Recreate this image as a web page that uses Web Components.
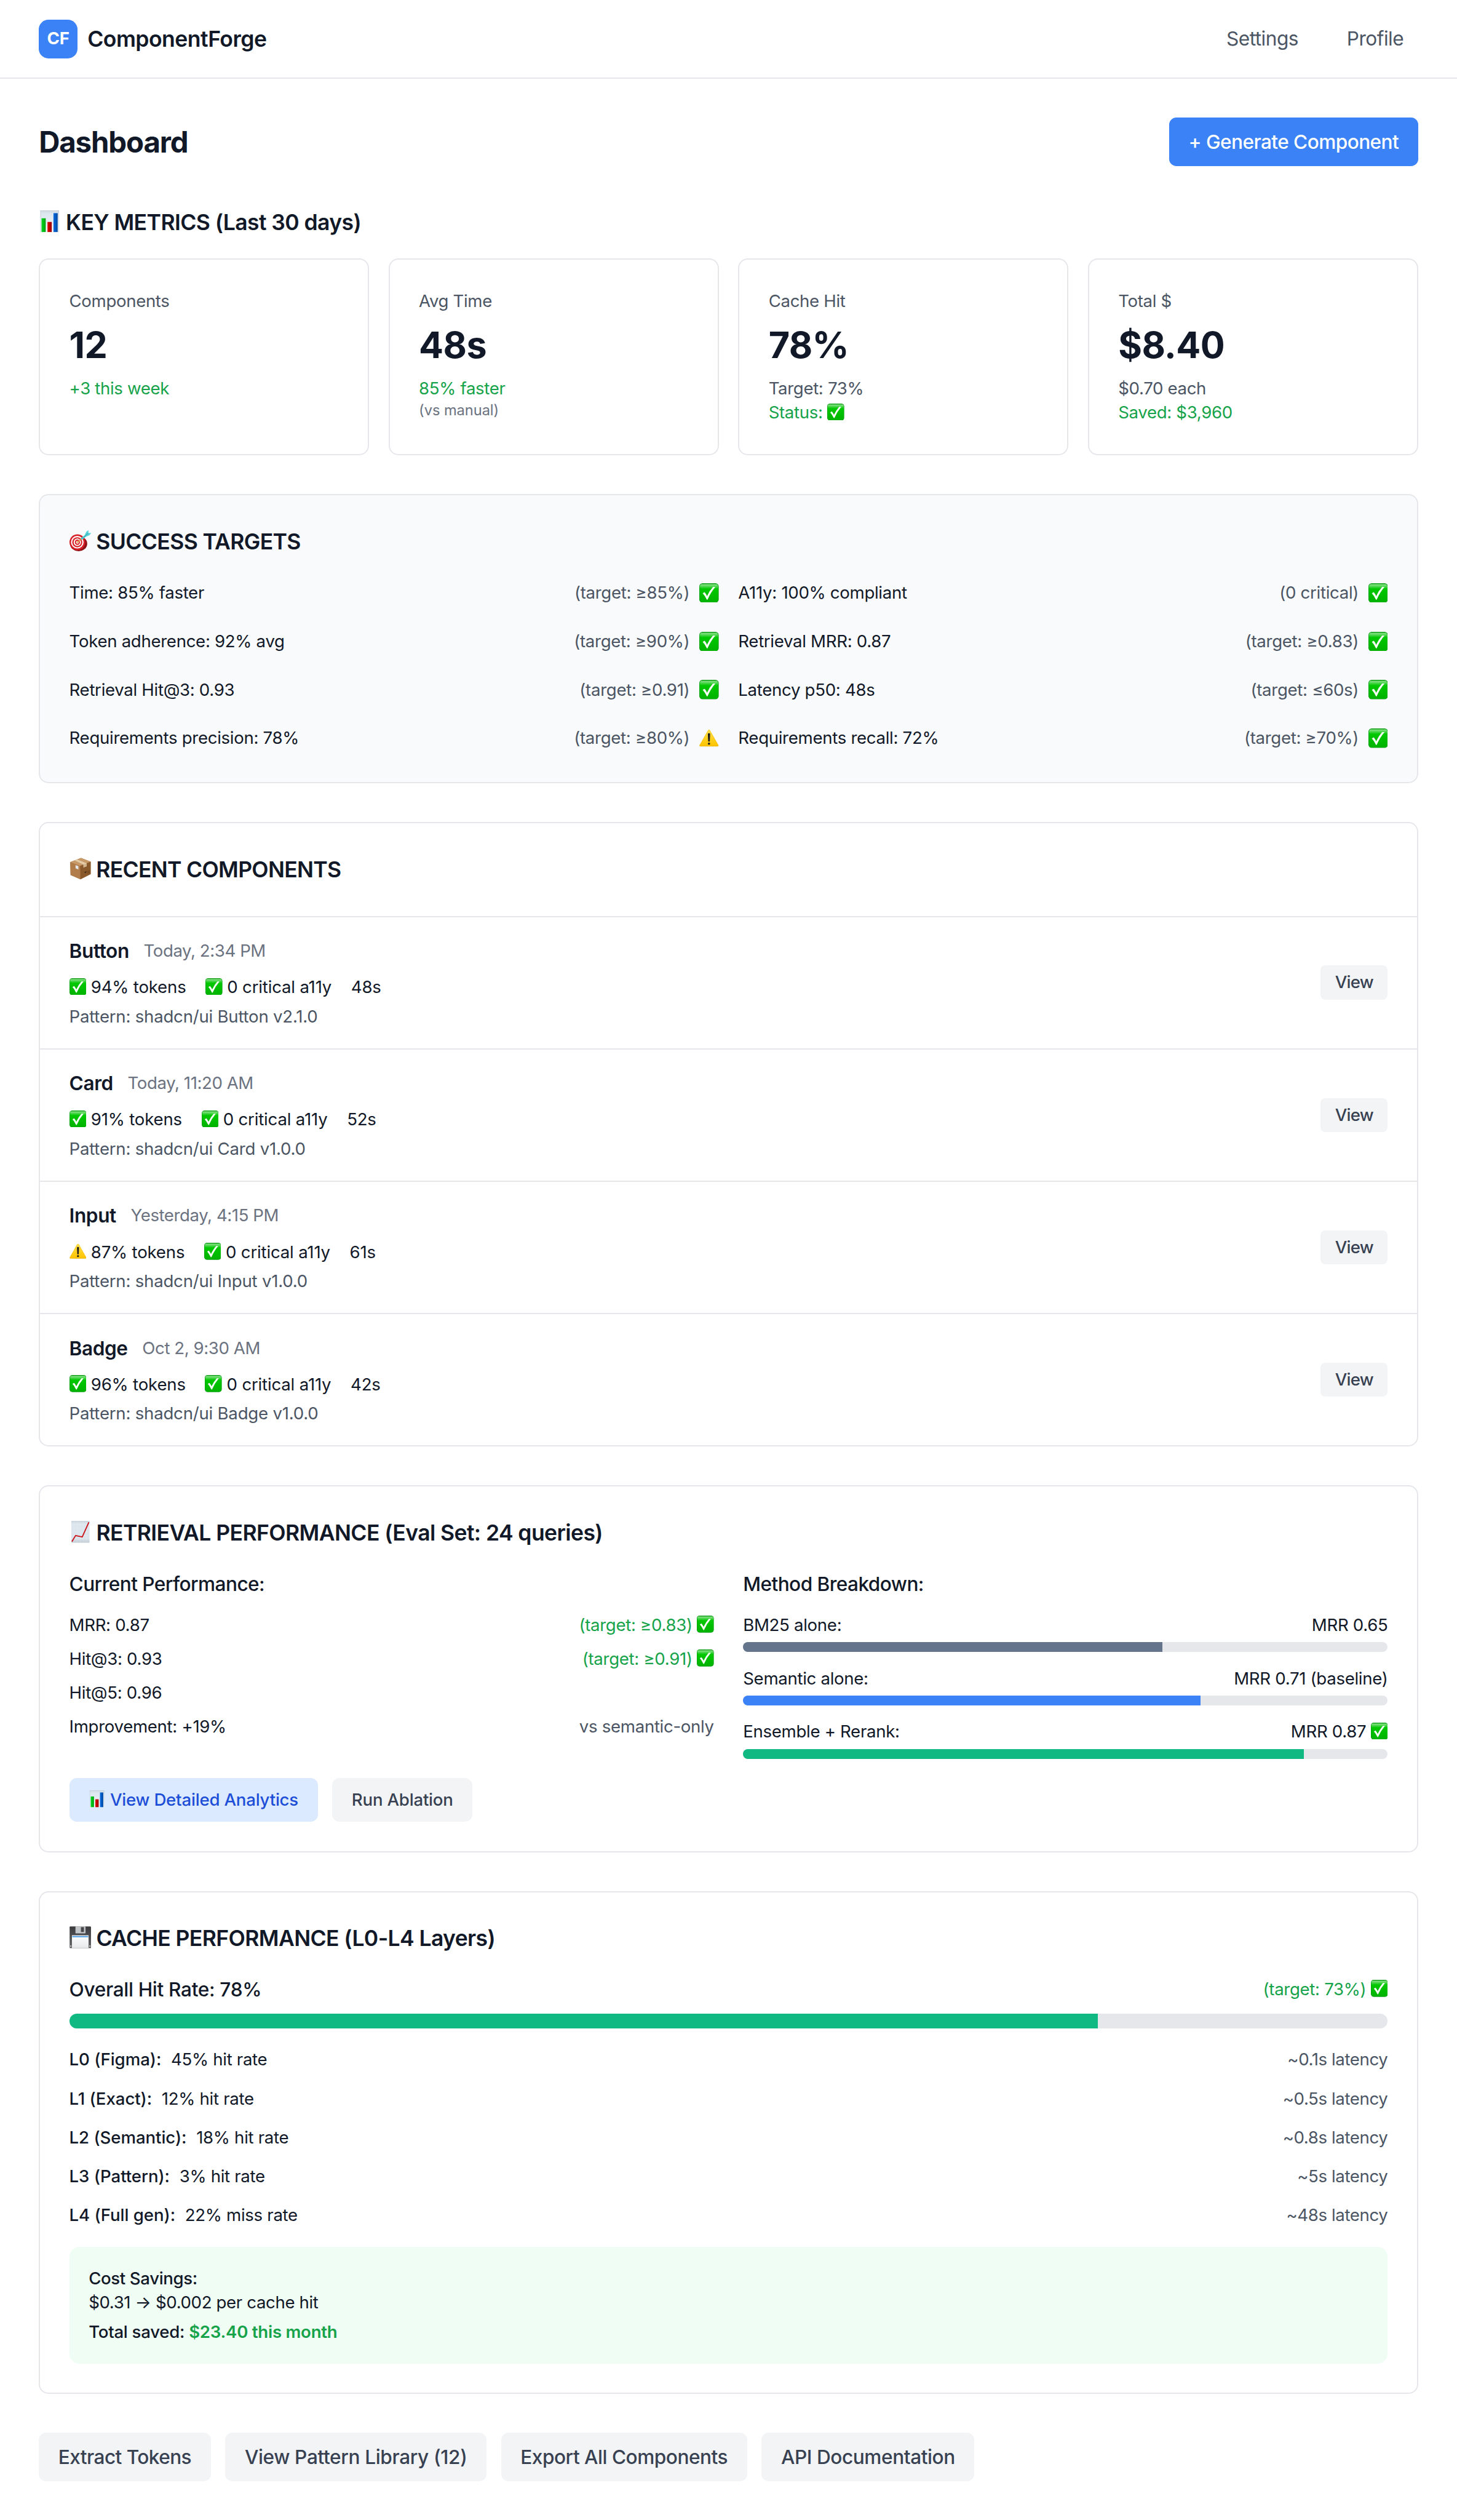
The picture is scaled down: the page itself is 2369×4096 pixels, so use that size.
<!DOCTYPE html>
<html lang="en">
<head>
<meta charset="utf-8">
<title>ComponentForge</title>
<style>
  /* 1rem is ten design pixels */
  html { font-size: 19.7417px; background: #fff; }
  body {
    margin: 0;
    font-family: Inter, "Liberation Sans", sans-serif;
    color: #111827;
    font-size: 1.6rem;
    line-height: 2.4rem;
    letter-spacing: -.016rem;
    -webkit-font-smoothing: antialiased;
  }
</style>
</head>
<body>
<dashboard-app></dashboard-app>

<script>
const define = (name, css, html) => {
  const tpl = document.createElement('template');
  tpl.innerHTML = `<style>*{box-sizing:border-box}:host{box-sizing:border-box;display:block}${css}</style>${html}`;
  customElements.define(name, class extends HTMLElement {
    constructor() {
      super();
      this.attachShadow({ mode: 'open' }).append(tpl.content.cloneNode(true));
    }
  });
};

const GLYPHS = {
  check: `<defs><linearGradient id="g" x1="0" y1="0" x2="0" y2="1"><stop offset="0" stop-color="#1fa81f"/><stop offset=".06" stop-color="#7fe07f"/><stop offset=".2" stop-color="#2fcf2f"/><stop offset=".28" stop-color="#00c800"/><stop offset="1" stop-color="#00b200"/></linearGradient></defs>
    <rect width="36" height="36" rx="6" fill="#0a9a14"/><rect x=".9" y=".9" width="34.2" height="34.4" rx="5.2" fill="url(#g)"/>
    <path d="M6.3 18.6 9.9 16.6Q12.8 20.2 14.3 23.8Q19.2 13.6 25.4 6.9L29.8 6.9Q21.2 17 15.4 30.2Q14.6 30.8 13.8 30.2Q10.8 23.6 6.3 18.6Z" fill="#fff"/>`,
  warn: `<defs><linearGradient id="g" x1="0" y1="0" x2="0" y2="1"><stop offset="0" stop-color="#ffe04a"/><stop offset="1" stop-color="#ffc400"/></linearGradient></defs>
    <path d="M18 2.2q1.1 0 1.8 1.2L35.4 30.8q1 2.4-1.4 2.6H2q-2.4-.2-1.4-2.6L16.2 3.4q.7-1.2 1.8-1.2Z" fill="#f0b400"/>
    <path d="M18 2.6q.9 0 1.5 1L34.9 30.6q.7 1.6-1 1.8H2.1q-1.7-.2-1-1.8L16.5 3.6q.6-1 1.5-1Z" fill="url(#g)"/>
    <path d="M15.9 10.3q0-1.6 2.1-1.6t2.1 1.6l-.6 13q-.2 1.3-1.5 1.3t-1.5-1.3Z" fill="#1c1c1c"/><circle cx="18" cy="28.2" r="2.1" fill="#1c1c1c"/>`,
  bars: `<defs><linearGradient id="g" x1="0" y1="0" x2="0" y2="1"><stop offset="0" stop-color="#cfd9e2"/><stop offset=".15" stop-color="#dde7ef"/><stop offset="1" stop-color="#f2f5f8"/></linearGradient><linearGradient id="a"><stop offset="0" stop-color="#00d81c"/><stop offset="1" stop-color="#00a010"/></linearGradient><linearGradient id="b"><stop offset="0" stop-color="#e00000"/><stop offset="1" stop-color="#9c0000"/></linearGradient><linearGradient id="c"><stop offset="0" stop-color="#0a6be0"/><stop offset="1" stop-color="#0048a0"/></linearGradient></defs>
    <rect x="2.7" y="0" width="30.6" height="36" fill="url(#g)"/><path d="M2.7 .5H33.3M3 0V36M33 0V36" stroke="#b9c4cd" stroke-width=".6"/>
    <rect x="4.6" y="13" width="6.9" height="22.6" fill="url(#a)"/><rect x="14.4" y="19" width="7" height="16.6" fill="url(#b)"/><rect x="24.2" y="4.5" width="7" height="31.1" fill="url(#c)"/>`,
  trend: `<defs><linearGradient id="g" x1="0" y1="0" x2="0" y2="1"><stop offset="0" stop-color="#c9d4dd"/><stop offset=".14" stop-color="#dde6ee"/><stop offset=".8" stop-color="#dbe4ec"/><stop offset="1" stop-color="#c2ccd4"/></linearGradient></defs>
    <rect x="3" y="0" width="30" height="36" fill="url(#g)"/><path d="M8 0V36M13 0V36M18 0V36M23 0V36M28 0V36M3 6H33M3 12H33M3 18H33M3 24H33M3 30H33" stroke="#fff" stroke-opacity=".3" stroke-width=".5"/>
    <path d="M4.4 33.4 10 24.2 21 26.4 31.6 3" fill="none" stroke="#c8141a" stroke-width="1.9" stroke-linejoin="round" stroke-linecap="round"/>`,
  target: `<ellipse cx="15" cy="23" rx="14.2" ry="12.4" fill="#8d1014"/><ellipse cx="13" cy="20.6" rx="13" ry="13" fill="#d61f26"/>
    <ellipse cx="12.8" cy="20.6" rx="10.4" ry="10.4" fill="#fff"/><ellipse cx="12.8" cy="20.7" rx="8.3" ry="8.4" fill="#d9252b"/><ellipse cx="12.9" cy="20.7" rx="6" ry="6.2" fill="#fff"/><ellipse cx="13" cy="20.7" rx="4.2" ry="4.4" fill="#d9252b"/><ellipse cx="13" cy="20.7" rx="2.2" ry="2.3" fill="#fff"/>
    <path d="M12.6 21 20 15" stroke="#d9a24a" stroke-width="1.7" stroke-linecap="round"/><path d="M18.6 14 25.2 9 27.4 11.2 20.4 16.6Z" fill="#45c3cc"/>
    <path d="M24.6 9.6 27.8 3.4 31.4.8 31 5.6 35.8 5.2 32.8 9.2 26.4 11.6Z" fill="#57d0d8"/><path d="M25 11 31 5.6" stroke="#2493a0" stroke-width=".9"/>`,
  box: `<path d="M1.2 7.4 19 0.6 34.9 6.6V27.2L18 35.6 1.8 28.6Z" fill="#a9733f"/><path d="M1.2 7.4 19 .6 34.9 6.6 17.6 13.8Z" fill="#c89a68"/><path d="M1.2 7.4 17.6 13.8 18 35.6 1.8 28.6Z" fill="#b07d4b"/><path d="M17.6 13.8 34.9 6.6V27.2L18 35.6Z" fill="#8a5a2c"/>
    <path d="M8.4 4.6 12.4 3.1 28.4 9.3V14.2L23 16.3V11.5Z" fill="#e3cba8"/><path d="M23 11.5 28.4 9.3V14.2L23 16.3Z" fill="#d0b48c"/>
    <path d="M10 12.4 14.6 14V19.4L10 17.6Z" fill="#e4e8ea"/><path d="M24 23.6 28.6 22 26.6 26Z" fill="#4f3216"/><path d="M30.4 21.4V26.6M32.4 20.6V25.8" stroke="#6a4420" stroke-width=".9"/>`,
  floppy: `<defs><linearGradient id="g" x1="0" y1="0" x2="0" y2="1"><stop offset="0" stop-color="#3c3c3e"/><stop offset="1" stop-color="#646466"/></linearGradient><linearGradient id="a" x1="0" y1="0" x2="0" y2="1"><stop offset="0" stop-color="#fff"/><stop offset="1" stop-color="#e6e8ea"/></linearGradient></defs>
    <path d="M.2 1.2Q.2.2 1.2.2H34.6L35.9 1.8V35Q35.9 35.9 35 35.9H1.2Q.2 35.9.2 35Z" fill="url(#g)"/><rect x="9.8" y=".2" width="16.6" height="11.4" rx=".8" fill="#c3c6c9"/><rect x="18.8" y="1.4" width="5" height="8" fill="#4a4a4c"/>
    <rect x="4" y="14.8" width="27.4" height="21.1" fill="url(#a)"/><rect x="4.6" y="16" width="26.2" height="2" fill="#4f9be0"/><path d="M1.2 32.6H3M32.6 32.6H34.6" stroke="#dedede" stroke-width="1.8"/>`
};

customElements.define('ui-emoji', class extends HTMLElement {
  constructor() { super(); this.attachShadow({ mode: 'open' }); }
  connectedCallback() {
    this.shadowRoot.innerHTML = `<style>:host{display:inline-block;width:1em;height:1em;vertical-align:-.11em;line-height:0;white-space:normal}svg{display:block;width:100%;height:100%}</style><svg viewBox="0 0 36 36" aria-hidden="true">${GLYPHS[this.getAttribute('name')]}</svg>`;
  }
});

define('brand-logo', `
  :host{display:flex;align-items:center;gap:.8rem;font-weight:600;font-size:1.8rem;line-height:2.8rem;letter-spacing:-.026rem}
  .mark{width:3.2rem;height:3.2rem;border-radius:.8rem;background:#3b82f6;color:#fff;display:flex;align-items:center;justify-content:center;font-size:1.4rem;font-weight:700;line-height:2rem;letter-spacing:0}`,
  `<span class="mark"><slot name="mark"></slot></span><span><slot></slot></span>`);

define('nav-link', `:host{padding:.8rem 1.2rem;color:#4b5563;letter-spacing:-.026rem}`, `<slot></slot>`);

define('app-header', `
  :host{border-bottom:2px solid #e5e7eb;height:6.5rem;padding:0 3.2rem;display:flex;align-items:center;justify-content:space-between}
  nav{display:flex;gap:1.6rem}`,
  `<slot name="brand"></slot><nav><slot></slot></nav>`);

define('ui-button', `
  :host{display:inline-flex;align-items:center;justify-content:center;white-space:pre;font-weight:500;padding:.8rem 1.6rem;border-radius:.6rem;background:#f3f4f6;color:#374151;letter-spacing:var(--track,-.024rem)}
  :host([variant=primary]){background:#3b82f6;color:#fff}
  :host([variant=soft]){background:#dbeafe;color:#1d4ed8}
  :host([size=md]){font-size:1.4rem;line-height:2rem;letter-spacing:-.011rem}
  :host([size=sm]){font-size:1.4rem;line-height:2rem;padding:.4rem 1.2rem;border-radius:.4rem;letter-spacing:-.04rem}`,
  `<span><slot></slot></span>`);

define('section-title', `h2{margin:0;font-size:1.8rem;line-height:2.8rem;font-weight:600;letter-spacing:var(--track,-.03rem)}`, `<h2><slot></slot></h2>`);

define('metric-card', `
  :host{border:2px solid #e5e7eb;border-radius:.8rem;padding:2.4rem;font-size:1.4rem;line-height:2rem;letter-spacing:-.018rem}
  .label{color:#4b5563}
  .value{font-size:3rem;line-height:3.6rem;font-weight:700;margin:.8rem 0;letter-spacing:-.03rem}`,
  `<div class="label"><slot name="label"></slot></div><div class="value"><slot name="value"></slot></div><slot></slot>`);

define('metric-note', `
  :host{color:#4b5563}
  :host([tone=good]){color:#16a34a}
  :host([tone=small]){color:#6b7280;font-size:1.2rem;line-height:1.6rem;letter-spacing:-.004rem}`, `<slot></slot>`);

define('panel-card', `
  :host{border:2px solid #e5e7eb;border-radius:.8rem;padding:2.4rem}
  :host([tinted]){background:#f9fafb}
  .body{margin-top:1.6rem}`,
  `<slot name="title"></slot><div class="body"><slot></slot></div>`);

define('target-row', `
  :host{display:flex;justify-content:space-between;align-items:center;height:2.4rem;font-size:1.4rem;line-height:2rem}
  .end{display:flex;align-items:center;gap:.8rem;color:#4b5563}
  .icon{font-size:1.6rem;line-height:2.4rem;display:flex;align-items:center}`,
  `<span><slot></slot></span><span class="end"><slot name="goal"></slot><span class="icon"><slot name="icon"></slot></span></span>`);

define('target-grid', `:host{display:grid;grid-template-columns:1fr 1fr;gap:1.6rem}`, `<slot></slot>`);

define('recent-list', `
  :host{border:2px solid #e5e7eb;border-radius:.8rem}
  .head{padding:2.4rem}`,
  `<div class="head"><slot name="title"></slot></div><slot></slot>`);

define('recent-item', `
  :host{display:flex;align-items:center;justify-content:space-between;height:10.9rem;padding:0 2.4rem;border-top:2px solid #e5e7eb;font-size:1.4rem;line-height:2rem}
  .top{display:flex;align-items:center;gap:1.2rem;height:2.4rem}
  .name{font-size:1.6rem;line-height:2.4rem;font-weight:600;letter-spacing:-.02rem}
  .when{color:#6b7280;letter-spacing:-.022rem}
  .stats{display:flex;gap:1.6rem;margin-top:.8rem;letter-spacing:-.01rem}
  .pattern{color:#4b5563;margin-top:.4rem;letter-spacing:-.012rem}`,
  `<div><div class="top"><span class="name"><slot name="name"></slot></span><span class="when"><slot name="when"></slot></span></div>
   <div class="stats"><slot></slot></div><div class="pattern"><slot name="pattern"></slot></div></div><ui-button size="sm">View</ui-button>`);

define('progress-bar', `
  :host{height:.8rem;border-radius:99rem;background:#e5e7eb;overflow:hidden}
  :host([thick]){height:1.2rem}
  .fill{height:100%;width:var(--value);background:var(--fill)}`, `<div class="fill"></div>`);

define('stat-line', `
  :host{display:flex;justify-content:space-between;font-size:1.4rem;line-height:2rem}
  :host([large]) .start{font-size:1.6rem;line-height:2.4rem;font-weight:500}
  :host([large]){align-items:center}
  .end{color:#111827}
  :host([tone=good]) .end{color:#16a34a}
  :host([tone=muted]) .end{color:#4b5563}`,
  `<span class="start"><slot></slot></span><span class="end"><slot name="end"></slot></span>`);

define('method-row', `progress-bar{margin-top:.4rem}`,
  `<stat-line><slot></slot><slot name="end" slot="end"></slot></stat-line><progress-bar></progress-bar>`);

define('sub-column', `
  h3{margin:0 0 1.2rem;font-size:1.6rem;line-height:2.4rem;font-weight:500;letter-spacing:-.028rem}
  .rows{display:flex;flex-direction:column;gap:var(--row-gap)}`,
  `<h3><slot name="title"></slot></h3><div class="rows"><slot></slot></div>`);

define('layer-row', `
  :host{display:flex;justify-content:space-between;font-size:1.4rem;line-height:2rem}
  .start{display:flex;gap:.8rem}.start b{font-weight:500;letter-spacing:-.003rem}
  .end{color:#4b5563;letter-spacing:-.02rem}`,
  `<span class="start"><b><slot name="layer"></slot></b><span><slot></slot></span></span><span class="end"><slot name="latency"></slot></span>`);

define('savings-note', `
  :host{background:#f0fdf4;border-radius:.8rem;padding:1.6rem;font-size:1.4rem;line-height:2rem;letter-spacing:-.019rem}
  .strong{font-weight:500}.total{font-weight:500;margin-top:.4rem;letter-spacing:-.014rem}`,
  `<div class="strong"><slot name="title"></slot></div><div><slot></slot></div><div class="total"><slot name="total"></slot></div>`);

const ok = '<ui-emoji name="check"></ui-emoji>', warn = '<ui-emoji name="warn"></ui-emoji>';
const title = (icon, text, track = '-.03rem') => `<section-title slot="title" style="--track:${track}"><ui-emoji name="${icon}"></ui-emoji> ${text}</section-title>`;
const target = (text, goal, icon = ok) => `<target-row>${text}<span slot="goal">${goal}</span><span slot="icon" style="display:flex">${icon}</span></target-row>`;
const recent = (name, when, icon, tokens, time, pattern) => `<recent-item><span slot="name">${name}</span><span slot="when">${when}</span><span>${icon} ${tokens} tokens</span><span>${ok} 0 critical a11y</span><span>${time}</span><span slot="pattern">Pattern: shadcn/ui ${pattern}</span></recent-item>`;
const layer = (name, rate, latency) => `<layer-row><span slot="layer">${name}:</span>${rate}<span slot="latency">${latency} latency</span></layer-row>`;
const method = (name, end, value, fill) => `<method-row style="--value:${value};--fill:${fill}">${name}<span slot="end">${end}</span></method-row>`;

define('dashboard-app', `
  main{padding:3.2rem;display:flex;flex-direction:column;gap:3.2rem}
  .head{display:flex;justify-content:space-between;align-items:center}
  h1{margin:0;font-size:2.4rem;line-height:3.2rem;font-weight:700;letter-spacing:-.058rem}
  .metrics{display:grid;grid-template-columns:repeat(4,1fr);gap:1.6rem;margin-top:1.6rem}
  .cols{display:grid;grid-template-columns:1fr 1fr;gap:2.4rem}
  .actions{display:flex;gap:1.2rem}
  .cols + .actions{margin-top:1.6rem}
  .layers{display:flex;flex-direction:column;gap:1.2rem;margin:1.6rem 0}
  progress-bar{margin-top:.8rem}
  .green{color:#16a34a;font-weight:600}`,
  `<app-header><brand-logo slot="brand"><span slot="mark">CF</span>ComponentForge</brand-logo><nav-link>Settings</nav-link><nav-link>Profile</nav-link></app-header>
  <main>
    <div class="head"><h1>Dashboard</h1><ui-button variant="primary" style="--track:-.028rem">+ Generate Component</ui-button></div>
    <section>
      ${title('bars', 'KEY METRICS (Last 30 days)').replace(' slot="title"', '')}
      <div class="metrics">
        <metric-card><span slot="label">Components</span><span slot="value">12</span><metric-note tone="good">+3 this week</metric-note></metric-card>
        <metric-card><span slot="label">Avg Time</span><span slot="value">48s</span><metric-note tone="good">85% faster</metric-note><metric-note tone="small">(vs manual)</metric-note></metric-card>
        <metric-card><span slot="label">Cache Hit</span><span slot="value">78%</span><metric-note>Target: 73%</metric-note><metric-note tone="good">Status: ${ok}</metric-note></metric-card>
        <metric-card><span slot="label">Total $</span><span slot="value">$8.40</span><metric-note>$0.70 each</metric-note><metric-note tone="good">Saved: $3,960</metric-note></metric-card>
      </div>
    </section>
    <panel-card tinted>${title('target', 'SUCCESS TARGETS', '-.033rem')}
      <target-grid>
        ${target('Time: 85% faster', '(target: ≥85%)')}${target('A11y: 100% compliant', '(0 critical)')}
        ${target('Token adherence: 92% avg', '(target: ≥90%)')}${target('Retrieval MRR: 0.87', '(target: ≥0.83)')}
        ${target('Retrieval Hit@3: 0.93', '(target: ≥0.91)')}${target('Latency p50: 48s', '(target: ≤60s)')}
        ${target('Requirements precision: 78%', '(target: ≥80%)', warn)}${target('Requirements recall: 72%', '(target: ≥70%)')}
      </target-grid>
    </panel-card>
    <recent-list>${title('box', 'RECENT COMPONENTS', '-.036rem')}
      ${recent('Button', 'Today, 2:34 PM', ok, '94%', '48s', 'Button v2.1.0')}
      ${recent('Card', 'Today, 11:20 AM', ok, '91%', '52s', 'Card v1.0.0')}
      ${recent('Input', 'Yesterday, 4:15 PM', warn, '87%', '61s', 'Input v1.0.0')}
      ${recent('Badge', 'Oct 2, 9:30 AM', ok, '96%', '42s', 'Badge v1.0.0')}
    </recent-list>
    <panel-card>${title('trend', 'RETRIEVAL PERFORMANCE (Eval Set: 24 queries)')}
      <div class="cols">
        <sub-column style="--row-gap:.8rem"><span slot="title">Current Performance:</span>
          <stat-line tone="good">MRR: 0.87<span slot="end">(target: ≥0.83) ${ok}</span></stat-line>
          <stat-line tone="good">Hit@3: 0.93<span slot="end">(target: ≥0.91) ${ok}</span></stat-line>
          <stat-line>Hit@5: 0.96</stat-line>
          <stat-line tone="muted">Improvement: +19%<span slot="end">vs semantic-only</span></stat-line>
        </sub-column>
        <sub-column style="--row-gap:1.2rem"><span slot="title">Method Breakdown:</span>
          ${method('BM25 alone:', 'MRR 0.65', '65%', '#64748b')}
          ${method('Semantic alone:', 'MRR 0.71 (baseline)', '71%', '#3b82f6')}
          ${method('Ensemble + Rerank:', `MRR 0.87 ${ok}`, '87%', '#10b981')}
        </sub-column>
      </div>
      <div class="actions"><ui-button variant="soft" size="md"><ui-emoji name="bars"></ui-emoji> View Detailed Analytics</ui-button><ui-button size="md">Run Ablation</ui-button></div>
    </panel-card>
    <panel-card>${title('floppy', 'CACHE PERFORMANCE (L0-L4 Layers)', '-.031rem')}
      <stat-line large tone="good">Overall Hit Rate: 78%<span slot="end">(target: 73%) ${ok}</span></stat-line>
      <progress-bar thick style="--value:78%;--fill:#10b981"></progress-bar>
      <div class="layers">
        ${layer('L0 (Figma)', '45% hit rate', '~0.1s')}${layer('L1 (Exact)', '12% hit rate', '~0.5s')}${layer('L2 (Semantic)', '18% hit rate', '~0.8s')}${layer('L3 (Pattern)', '3% hit rate', '~5s')}${layer('L4 (Full gen)', '22% miss rate', '~48s')}
      </div>
      <savings-note><span slot="title">Cost Savings:</span>$0.31 → $0.002 per cache hit<span slot="total">Total saved: <span class="green">$23.40 this month</span></span></savings-note>
    </panel-card>
    <div class="actions"><ui-button style="--track:-.028rem">Extract Tokens</ui-button><ui-button style="--track:-.018rem">View Pattern Library (12)</ui-button><ui-button>Export All Components</ui-button><ui-button style="--track:-.021rem">API Documentation</ui-button></div>
  </main>`);
</script>
</body>
</html>
